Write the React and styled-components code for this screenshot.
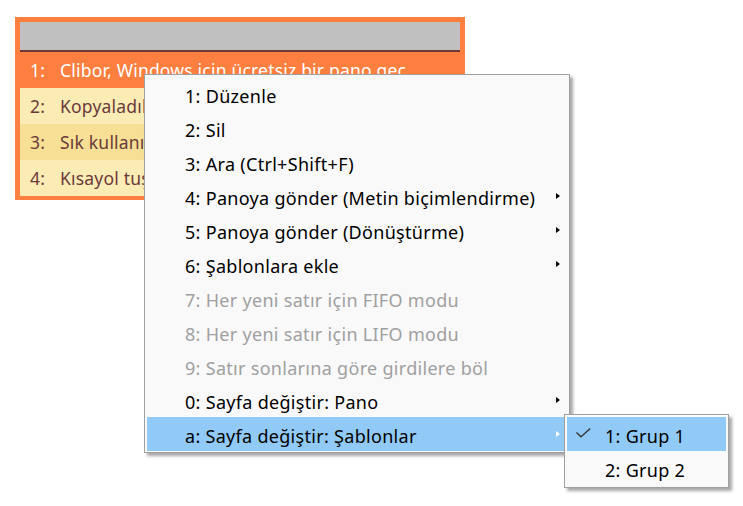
import React from "react";
import styled, { createGlobalStyle } from "styled-components";

const Global = createGlobalStyle`
  html, body { margin: 0; padding: 0; background: #ffffff; }
  body { font-family: "Noto Sans", "Open Sans", sans-serif; }
`;

const Desktop = styled.div`
  position: relative;
  width: 743px;
  height: 506px;
  overflow: hidden;
  background: #ffffff;
  padding: 17px 0 0 15px;
  box-sizing: border-box;
`;

const Window = styled.div`
  display: flex;
  flex-direction: column;
  width: 450px;
  box-sizing: border-box;
  border-style: solid;
  border-color: #ff7f40;
  border-width: 5px 5px 4px 5px;
  background: #ff7f40;
`;

const TitleBar = styled.div`
  height: 28px;
  background: #c0c0c0;
  border-bottom: 2px solid #6b3a3a;
`;

const rowColors = {
  active: "#ff7f40",
  light: "#fbebb5",
  dark: "#f7df95",
};

const Row = styled.div`
  display: grid;
  grid-template-columns: 30px 1fr;
  align-items: center;
  height: 36px;
  padding-left: 10px;
  background: ${(p) => rowColors[p.$tone]};
  color: ${(p) => (p.$tone === "active" ? "#ffffff" : "#6b3a3a")};
  font-size: 17.5px;
  letter-spacing: 0.2px;
  white-space: nowrap;
  overflow: hidden;
`;

const Menu = styled.div`
  position: absolute;
  left: ${(p) => p.$x}px;
  top: ${(p) => p.$y}px;
  width: ${(p) => p.$w}px;
  box-sizing: border-box;
  display: flex;
  flex-direction: column;
  padding: 2px 2px ${(p) => p.$pb}px 2px;
  background: #f9f9f9;
  border: 1px solid #a0a0a0;
  box-shadow: 3px 3px 3px rgba(0, 0, 0, 0.35);
  font-size: 18px;
  letter-spacing: 0.3px;
`;

const Item = styled.div`
  display: grid;
  grid-template-columns: 38px 1fr 11px;
  align-items: center;
  box-sizing: border-box;
  height: 34px;
  padding-top: 3px;
  white-space: nowrap;
  color: ${(p) => (p.$disabled ? "#a0a0a0" : "#000000")};
  background: ${(p) => (p.$hot ? "#91c9f7" : "transparent")};
`;

const Label = styled.span`
  grid-column: 2;
`;

const Arrow = styled.span`
  grid-column: 3;
  justify-self: start;
  margin-top: -4px;
  width: 0;
  height: 0;
  border-top: 3.5px solid transparent;
  border-bottom: 3.5px solid transparent;
  border-left: 4px solid ${(p) => (p.$light ? "#ffffff" : "#000000")};
`;

const CheckMark = styled.svg`
  grid-column: 1;
  justify-self: start;
  margin: -6px 0 0 9px;
`;

const rows = [
  { n: "1:", t: "Clibor, Windows için ücretsiz bir pano geç", tone: "active" },
  { n: "2:", t: "Kopyaladıklarınızı kaydeder", tone: "light" },
  { n: "3:", t: "Sık kullanılan metinleri şablon olarak", tone: "dark" },
  { n: "4:", t: "Kısayol tuşları ile hızlıca yapıştırın", tone: "light" },
];

const items = [
  { t: "1: Düzenle" },
  { t: "2: Sil" },
  { t: "3: Ara (Ctrl+Shift+F)" },
  { t: "4: Panoya gönder (Metin biçimlendirme)", sub: true },
  { t: "5: Panoya gönder (Dönüştürme)", sub: true },
  { t: "6: Şablonlara ekle", sub: true },
  { t: "7: Her yeni satır için FIFO modu", off: true },
  { t: "8: Her yeni satır için LIFO modu", off: true },
  { t: "9: Satır sonlarına göre girdilere böl", off: true },
  { t: "0: Sayfa değiştir: Pano", sub: true },
  { t: "a: Sayfa değiştir: Şablonlar", sub: true, hot: true },
];

const groups = [
  { t: "1: Grup 1", checked: true },
  { t: "2: Grup 2" },
];

export default function App() {
  return (
    <>
      <Global />
      <Desktop>
        <Window>
          <TitleBar />
          {rows.map((r) => (
            <Row key={r.n} $tone={r.tone}>
              <span>{r.n}</span>
              <span>{r.t}</span>
            </Row>
          ))}
        </Window>

        <Menu $x={144} $y={74} $w={426} $pb={1}>
          {items.map((it) => (
            <Item key={it.t} $disabled={it.off} $hot={it.hot}>
              <Label>{it.t}</Label>
              {it.sub && <Arrow $light={it.hot} />}
            </Item>
          ))}
        </Menu>

        <Menu $x={564} $y={414} $w={165} $pb={2}>
          {groups.map((g) => (
            <Item key={g.t} $hot={g.checked}>
              {g.checked && (
                <CheckMark width="15" height="10" viewBox="0 0 15 10">
                  <path d="M0.5 4.5 L5 8.8 L14.2 0.6" fill="none" stroke="#333333" strokeWidth="1.3" />
                </CheckMark>
              )}
              <Label>{g.t}</Label>
            </Item>
          ))}
        </Menu>
      </Desktop>
    </>
  );
}
